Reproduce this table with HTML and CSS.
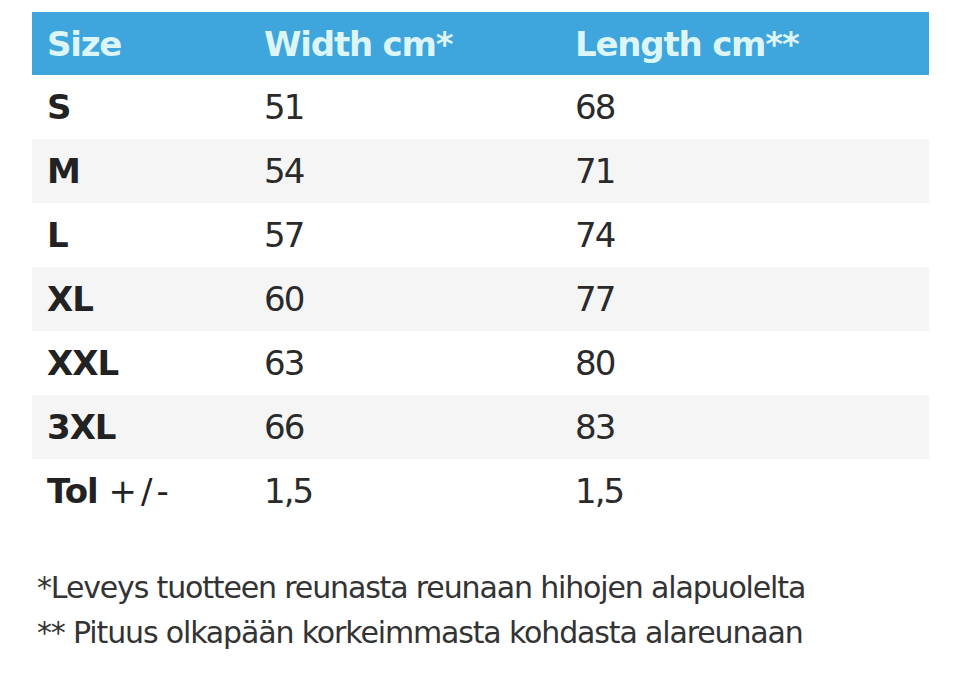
FILE: index.html
```html
<!DOCTYPE html>
<html lang="fi">
<head>
<meta charset="utf-8">
<title>Size chart</title>
<link rel="stylesheet" href="styles.css">
</head>
<body>
<div class="page">
  <table class="chart">
    <colgroup>
      <col class="c1"><col class="c2"><col class="c3">
    </colgroup>
    <thead>
      <tr><th>Size</th><th>Width cm*</th><th>Length cm**</th></tr>
    </thead>
    <tbody>
      <tr><td class="sz">S</td><td>51</td><td>68</td></tr>
      <tr><td class="sz">M</td><td>54</td><td>71</td></tr>
      <tr><td class="sz">L</td><td>57</td><td>74</td></tr>
      <tr><td class="sz">XL</td><td>60</td><td>77</td></tr>
      <tr><td class="sz">XXL</td><td>63</td><td>80</td></tr>
      <tr><td class="sz">3XL</td><td>66</td><td>83</td></tr>
      <tr><td class="sz">Tol <span class="pm">+/-</span></td><td>1,5</td><td>1,5</td></tr>
    </tbody>
  </table>
  <div class="notes">
    <p>*Leveys tuotteen reunasta reunaan hihojen alapuolelta</p>
    <p>** Pituus olkapään korkeimmasta kohdasta alareunaan</p>
  </div>
</div>
</body>
</html>
```
FILE: styles.css
```css
html, body {
  margin: 0;
  padding: 0;
  background: #ffffff;
}
.page {
  padding: 12px 0 0 32px;
  font-family: "DejaVu Sans", Verdana, sans-serif;
  color: #222222;
}
.chart {
  border-collapse: collapse;
  width: 897px;
  table-layout: fixed;
}
.c1 { width: 217px; }
.c2 { width: 311px; }
.c3 { width: 369px; }
.chart th {
  background: #3ea5dd;
  color: #dcf6f8;
  font-weight: bold;
  font-size: 34px;
  letter-spacing: -1.2px;
  text-align: left;
  height: 63px;
  padding: 0 0 0 15px;
  vertical-align: middle;
}
.chart td {
  height: 64px;
  padding: 0 0 0 15px;
  font-size: 34px;
  letter-spacing: -2px;
  vertical-align: middle;
  color: #2a2a2a;
}
.chart tbody tr:nth-child(even) td {
  background: #f5f5f5;
}
.chart td.sz {
  font-weight: bold;
  letter-spacing: -1px;
  color: #222222;
}
.pm {
  font-weight: normal;
  letter-spacing: 4px;
}
.notes {
  margin-top: 42px;
  padding-left: 5px;
  font-size: 30px;
  letter-spacing: -1.15px;
  color: #333333;
}
.notes p {
  margin: 0;
  line-height: 45px;
}
```
